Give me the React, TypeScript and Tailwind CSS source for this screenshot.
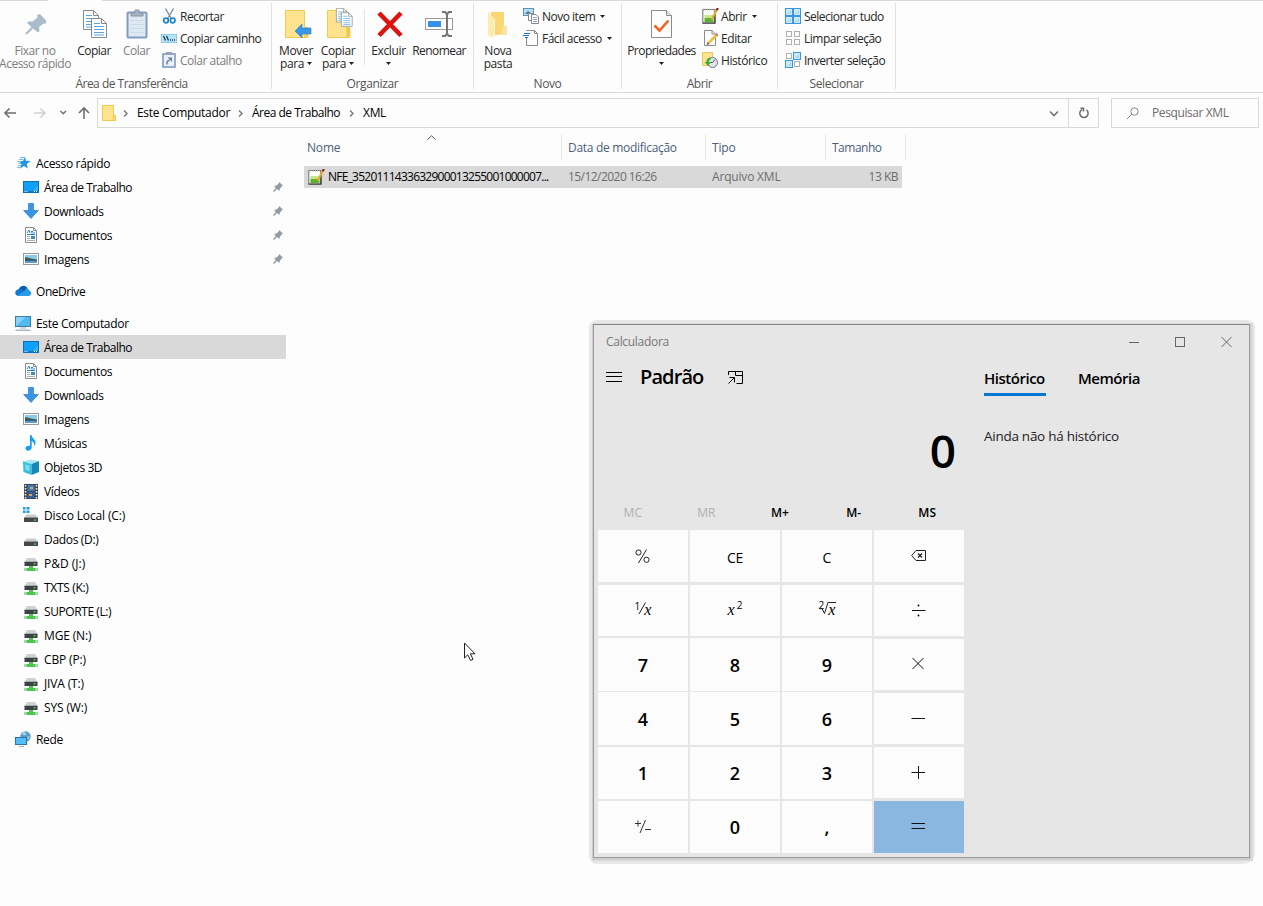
import React, { ReactNode } from 'react';
import clsx from 'clsx';

/* ---------- ribbon icons ---------- */

const PinLarge = () => (
  <svg width="32" height="32" viewBox="0 0 32 32" fill="#a9bccb">
    <path d="M18 7 L21 6 L27.500 13 L26.500 16 L24.500 15.500 L20 19 L20.500 23 L19 24.500 L14 20.500 L8.500 26 L6.500 26.500 L7 24.500 L12.500 19 L8 15 L9.500 13.500 L13.500 13.500 L18.500 9.500 Z" />
  </svg>
);

const Page = ({ x, y }: { x: number; y: number }) => (
  <g transform={`translate(${x} ${y})`}>
    <path d="M.5 .5 H10.500 L15.500 5.500 V19.500 H.5 Z" fill="#fff" stroke="#8a8a8a" />
    <path d="M10.500 .5 V5.500 H15.500" fill="none" stroke="#8a8a8a" />
    <path d="M3 5.500 H9 M3 8.500 H13 M3 11.500 H13 M3 14.500 H13 M3 17 H13" stroke="#58a6e8" />
  </g>
);

const CopyLarge = () => (
  <svg width="32" height="32" viewBox="0 0 32 32">
    <Page x={5} y={2} />
    <Page x={13} y={10} />
  </svg>
);

const PasteLarge = () => (
  <svg width="32" height="32" viewBox="0 0 32 32">
    <rect x="6.500" y="4.500" width="19" height="25" rx="1" fill="#dfe9f4" stroke="#7f9cc4" strokeWidth="2" />
    <path d="M10 8 V5 H14 V2 H18 V5 H22 V8 Z" fill="#aab4be" stroke="#8795a5" />
    <path d="M9 12.500 H23 M9 16.500 H23 M9 20.500 H23 M9 24.500 H23" stroke="#c9daeb" />
  </svg>
);

const FolderShape = () => (
  <>
    <path d="M3 2 H23 V22 H27 V30 H3 Z" fill="#ffe38f" />
    <path d="M3.500 2.500 H22.500 V21 M25 29.500 H3.500 V2.500" fill="none" stroke="#efcb52" />
    <path d="M22.500 19 H26 V28 L22.500 30 Z" fill="#f0c64c" />
  </>
);

const MoveTo = () => (
  <svg width="32" height="32" viewBox="-2 0 32 32">
    <FolderShape />
    <path d="M13 23 L20 16 V20 H29 V26 H20 V30 Z" fill="#3a96e6" stroke="#2c83d0" strokeWidth=".6" />
  </svg>
);

const CopyTo = () => (
  <svg width="32" height="32" viewBox="-2 0 32 32">
    <FolderShape />
    <g transform="translate(12 0) scale(.72)">
      <Page x={0} y={0} />
      <Page x={7} y={6} />
    </g>
  </svg>
);

const Delete = () => (
  <svg width="32" height="32" viewBox="0 0 32 32">
    <path d="M6 5 L28 27.500 M28 5 L6 27.500" stroke="#e0120f" strokeWidth="4.600" />
  </svg>
);

const Rename = () => (
  <svg width="32" height="32" viewBox="0 0 32 32" fill="none">
    <rect x="2.500" y="10.500" width="27" height="11" stroke="#9a9a9a" fill="#fff" />
    <rect x="5" y="13" width="13" height="6" fill="#3592e4" />
    <path d="M24 6 V26" stroke="#757575" strokeWidth="2" />
    <path d="M19 4 H22 L24 6 L26 4 H29 M19 28 H22 L24 26 L26 28 H29" stroke="#757575" strokeWidth="2" />
  </svg>
);

const NewFolder = () => (
  <svg width="32" height="32" viewBox="0 0 32 32">
    <path d="M9 4 H22 V26 L9 28 Z" fill="#f9d775" />
    <path d="M21 18 H25 V27 H19 Z" fill="#fbe4a0" />
    <path d="M6 4 L12 10 V20 L10 30 L6 27 Z" fill="#fdebb0" />
    <path d="M12 12 V24 L9.500 30 L13 27 V10 Z" fill="#fff6d8" />
  </svg>
);

const Properties = () => (
  <svg width="32" height="32" viewBox="0 0 32 32" fill="none">
    <path d="M5.500 2.500 H20.500 L25.500 7.500 V29.500 H5.500 Z" fill="#fff" stroke="#8c8c8c" />
    <path d="M20.500 2.500 V7.500 H25.500" fill="#e6e6e6" stroke="#8c8c8c" />
    <path d="M8.500 17.500 L13.500 22.500 L22.500 12.500" stroke="#f26422" strokeWidth="2.600" />
  </svg>
);

const Cut = () => (
  <svg width="16" height="16" viewBox="0 0 16 16" fill="none">
    <path d="M4.500 .5 L10.500 11 M12.500 .5 L6.500 11" stroke="#8a949c" strokeWidth="1.500" />
    <circle cx="5" cy="12.500" r="2.300" stroke="#1b84d0" strokeWidth="1.700" />
    <circle cx="11.700" cy="12.500" r="2.300" stroke="#1b84d0" strokeWidth="1.700" />
  </svg>
);

const CopyPath = () => (
  <svg width="16" height="16" viewBox="0 0 16 16">
    <rect x=".5" y="4.500" width="15" height="8" fill="#b5e4fa" stroke="#8fcbe9" />
    <path d="M2.500 6 L4.500 10.500 M5.500 6 L7.500 10.500 M9 10 h1 M11 10 h1 M13 10 h1" stroke="#173b57" strokeWidth="1.300" />
  </svg>
);

const PasteShortcut = () => (
  <svg width="16" height="16" viewBox="0 0 16 16">
    <rect x="2" y="2" width="12" height="13" fill="#eaf1f8" stroke="#7f9ac0" strokeWidth="1.600" />
    <rect x="5" y="0" width="6" height="3" fill="#93a4b8" />
    <path d="M6 12.500 C5.500 10 6.500 8.500 8.500 8.500" fill="none" stroke="#67809f" strokeWidth="1.500" />
    <path d="M6.500 5.500 H11 V10 Z" fill="#67809f" />
  </svg>
);

const NewItem = () => (
  <svg width="16" height="16" viewBox="0 0 16 16">
    <rect x=".5" y=".5" width="10" height="7" fill="#b9def2" stroke="#5b93b5" />
    <path d="M2 6 L5 3 L9 6" fill="#3f7896" />
    <path d="M5.500 5.500 H10 V12.500 H5.500 Z" fill="#fff" stroke="#8a8a8a" />
    <path d="M8.500 6.500 H13 L15.500 9 V15.500 H8.500 Z" fill="#fff" stroke="#8a8a8a" />
    <path d="M10 9.500 H14 M10 11.500 H14 M10 13.500 H14" stroke="#8fa7c4" />
  </svg>
);

const EasyAccess = () => (
  <svg width="16" height="16" viewBox="0 0 16 16" fill="none">
    <path d="M3.500 .5 H11.500 L14.500 3.500 V15.500 H3.500 V8" fill="#fff" stroke="#8a8a8a" />
    <path d="M11.500 .5 V3.500 H14.500" stroke="#8a8a8a" />
    <path d="M1 3.500 H7 M0 5.500 H6 M2 7.500 H5" stroke="#1d6fb5" strokeWidth="1.200" />
  </svg>
);

const NotepadIcon = () => (
  <svg width="17" height="16" viewBox="0 0 17 16">
    <rect x=".8" y="1.500" width="12" height="13.700" fill="#fbfdf8" stroke="#6b6f6b" />
    <path d="M1 1.500 H13" stroke="#9aa6a0" strokeWidth="1.600" strokeDasharray="1 1" />
    <path d="M.8 15 H13 V6" fill="none" stroke="#2f332f" strokeWidth="1.200" />
    <rect x="2.500" y="7" width="9" height="3" fill="#c6e68a" />
    <rect x="2.500" y="10" width="9" height="4" fill="#5cb22e" />
    <path d="M14.800 2 L9.500 12" stroke="#e9a62c" strokeWidth="2" />
    <path d="M15.900 0 L14.700 2.300" stroke="#8b1a1a" strokeWidth="2.200" />
  </svg>
);

const EditIcon = () => (
  <svg width="16" height="16" viewBox="0 0 16 16">
    <path d="M2.500 .5 H10 L13.500 4 V15.500 H2.500 Z" fill="#fff" stroke="#8d8d8d" />
    <path d="M10 .5 V4 H13.500" fill="none" stroke="#8d8d8d" />
    <path d="M14.500 5 L6.500 13" stroke="#f2bd42" strokeWidth="2.500" />
    <path d="M15.500 4 L14 5.500" stroke="#d9746b" strokeWidth="2.500" />
    <path d="M4.500 15 L5.500 12 L7.500 14 Z" fill="#555" />
  </svg>
);

const HistoryIcon = () => (
  <svg width="16" height="16" viewBox="0 0 16 16">
    <path d="M.5 .5 H10.500 V13.500 H.5 Z" fill="#ffe38f" stroke="#e9c655" />
    <circle cx="10.500" cy="10.500" r="5" fill="#dfe5e9" stroke="#707b83" />
    <path d="M10.500 10.500 L13 7.500 M10.500 10.500 H8" stroke="#4b565e" fill="none" />
    <path d="M8 5.500 C5 6 4.500 8 4.500 10 H2.500 L6 14 L9 10 H7 C7 8.500 7.500 7.500 9 7.500 Z" fill="#3fae3f" />
  </svg>
);

const SelectTile = ({ x, y, on }: { x: number; y: number; on: boolean }) =>
  on ? (
    <>
      <rect x={x + 0.5} y={y + 0.5} width="7" height="7" fill="#cdeafc" stroke="#3a96dc" />
      <path d={`M${x + 2} ${y + 6} L${x + 6} ${y + 2} V${y + 6} Z`} fill="#a5d8f8" />
    </>
  ) : (
    <rect x={x + 1.5} y={y + 1.5} width="5" height="5" fill="#fff" stroke="#b0b0b0" />
  );

const SelectIcon = ({ tiles }: { tiles: boolean[] }) => (
  <svg width="16" height="16" viewBox="0 0 16 16">
    {tiles.map((on, i) => (
      <SelectTile key={i} x={(i % 2) * 8} y={i < 2 ? 0 : 8} on={on} />
    ))}
  </svg>
);

/* ---------- navigation icons ---------- */

const StarIcon = () => (
  <svg width="16" height="16" viewBox="0 0 16 16">
    <path d="M10 1.500 L10.800 5.800 L15.500 6 L11.700 9 L12.800 13.500 L9 11 L5 13.700 L6.500 9.300 L4 6.300 L8 6 Z" fill="#2494e4" />
    <path d="M5 2.500 H9 M4 4.500 H8 M2.500 6.500 H6 M3.500 8.500 H6 M3 10.500 H6 M2 12.500 H5" stroke="#6dbdf2" />
  </svg>
);

const DesktopIcon = () => (
  <svg width="16" height="16" viewBox="0 0 16 16">
    <rect x=".5" y="2.500" width="15" height="11" fill="#10a0fb" stroke="#0d6db8" />
    <path d="M9 12.500 L15 6.500 V12.500 Z" fill="#2fb0ff" />
    <path d="M1 12.500 H15" stroke="#0b79cd" />
    <path d="M1.500 12.500 h1 M3.500 12.500 h1 M11 12.500 h1 M13 12.500 h1" stroke="#fff" />
  </svg>
);

const DownloadIcon = () => (
  <svg width="16" height="16" viewBox="0 0 16 16">
    <path d="M5.500 .5 H10.500 V7.500 H15.300 L8 15.500 L.7 7.500 H5.500 Z" fill="#3a94e6" stroke="#2d7fca" strokeWidth=".7" />
  </svg>
);

const DocumentIcon = () => (
  <svg width="16" height="16" viewBox="0 0 16 16">
    <path d="M2.500 .5 H10.500 L13.500 3.500 V15.500 H2.500 Z" fill="#fff" stroke="#8c8c8c" />
    <path d="M10.500 .5 V3.500 H13.500" fill="none" stroke="#8c8c8c" />
    <path d="M4 6 L6 3 L7 6 M8 4.500 H10 M4 7.500 H12 M8 6 H12" stroke="#2b8bd0" fill="none" />
    <path d="M4 9.500 H7 M4 11.500 H7 M4 13.500 H12" stroke="#9bb4c8" />
    <rect x="8" y="9" width="4" height="3" fill="#3f8fb8" />
  </svg>
);

const PictureIcon = () => (
  <svg width="16" height="16" viewBox="0 0 16 16">
    <rect x=".5" y="2.500" width="15" height="11" fill="#fff" stroke="#9a9a9a" />
    <rect x="2" y="4" width="12" height="8" fill="#8fc8ec" />
    <path d="M2 6 C5 6.500 9 8 14 8.500 V10 H2 Z" fill="#3d5f63" />
    <rect x="2" y="10" width="12" height="2" fill="#5c9cc8" />
  </svg>
);

const OneDriveIcon = () => (
  <svg width="17" height="16" viewBox="0 0 17 16">
    <path d="M3.500 7 C5 2 11 1.500 12.500 5.500 L9 10 L3 8 Z" fill="#0a5fb4" />
    <path d="M4 13 C-1 13 -1 6.500 4 6.300 C6 5.800 8 7.500 9 8.500 L6 13 Z" fill="#1279d0" />
    <path d="M2.500 12.500 L10 7.500 C10.500 4.500 14 5 14.200 7.500 C17 8 17 13 13.500 13 H4 Z" fill="#2a9be8" />
  </svg>
);

const ComputerIcon = () => (
  <svg width="16" height="16" viewBox="0 0 16 16">
    <rect x=".5" y="1.500" width="15" height="10" fill="#4fb9f2" stroke="#3d7ea6" />
    <path d="M1 11 V2 H11 Z" fill="#86d2f9" />
    <path d="M5 13 H11" stroke="#9db0bb" />
    <path d="M.5 15.200 H15.500" stroke="#8796a1" />
  </svg>
);

const MusicIcon = () => (
  <svg width="16" height="16" viewBox="0 0 16 16">
    <path d="M7 0 H8.500 C8.500 3 12.500 4 12.500 7.500 C12.500 9 12 10 11 11 C11.500 8 10 6.500 8.700 6 V12.500 C8.700 16 3 17 2.500 13.500 C2.300 11 5 10.200 7 11 Z" fill="#149ff0" />
  </svg>
);

const CubeIcon = () => (
  <svg width="16" height="16" viewBox="0 0 16 16">
    <path d="M0 2.500 L7 .5 L16 2 L8.500 5 Z" fill="#a5e7f5" />
    <path d="M0 2.500 L8.500 5 V16 L.5 13 Z" fill="#35bfe0" />
    <path d="M8.500 5 L16 2 V13 L8.500 16 Z" fill="#1789b8" />
    <path d="M2 5.500 L6.500 6.500 V12 L2.500 11 Z" fill="#7cdcf0" />
  </svg>
);

const VideoIcon = () => (
  <svg width="16" height="16" viewBox="0 0 16 16">
    <rect x="1" y="1" width="14" height="15" fill="#44464a" />
    <path d="M2.500 2 V16 M13.500 2 V16" stroke="#f2f2f2" strokeWidth="1.500" strokeDasharray="1.500 1.500" />
    <rect x="4.500" y="2" width="7" height="6" fill="#3b78c2" />
    <rect x="4.500" y="9" width="7" height="6" fill="#2e5fa5" />
    <path d="M7 4 H10 V6 H7 Z M6 11 H9 V13 H6 Z" fill="#e3a33a" />
  </svg>
);

const DriveIcon = ({ windows }: { windows?: boolean }) => (
  <svg width="16" height="16" viewBox="0 0 16 16">
    {windows && <path d="M0 0 H2.500 V2.500 H0 Z M3.500 0 H6.500 V2.500 H3.500 Z M0 3.500 H2.500 V6 H0 Z M3.500 3.500 H6.500 V6 H3.500 Z" fill="#18a0f5" />}
    <path d="M3.500 7.500 H12.500 L15 10.800 H1 Z" fill="#c9cccd" />
    <rect x="1" y="10.500" width="14" height="4.500" rx=".5" fill="#454749" />
    <rect x="11" y="12.500" width="2" height="1.200" fill="#55e04c" />
  </svg>
);

const NetDriveIcon = () => (
  <svg width="16" height="16" viewBox="0 0 16 16">
    <path d="M4 3 H12 L14.500 7 H1.500 Z" fill="#cfd2d4" />
    <rect x="1.500" y="6.800" width="13" height="4.200" rx=".5" fill="#3e4143" />
    <rect x="10.500" y="8.200" width="2" height="1.300" fill="#55e04c" />
    <path d="M6 11 H10 V13 H12.500 V16 H3.500 V13 H6 Z" fill="#4cc552" />
    <path d="M1 13.200 H4 V15.800 H1 Z M12 13.200 H15 V15.800 H12 Z" fill="#8fd492" />
  </svg>
);

const NetworkIcon = () => (
  <svg width="16" height="16" viewBox="0 0 16 16">
    <circle cx="10.500" cy="5.500" r="5.200" fill="#5a9cc6" />
    <path d="M8 1 C6 4 9 5 11 4 C12 2 10 1 8 1 Z M12 6 L15 5 L13 9 Z" fill="#a6d2ea" />
    <rect x=".5" y="6.500" width="11" height="7" fill="#55bdf5" stroke="#2c74a8" />
    <path d="M4 15.500 H9" stroke="#9fb2bf" />
  </svg>
);

const PinSmall = () => (
  <svg width="10" height="10" viewBox="0 0 10 10" fill="#909ba7">
    <path d="M6 0 L10 3.500 L8.500 4.500 L6.800 7 L6.500 9 L4.200 7 L1 10 L0 9.500 L2.800 6 L1 4 L3.500 3.500 L5.700 1.500 Z" />
  </svg>
);

const Chevron = () => (
  <svg width="5" height="7" viewBox="0 0 5 7" fill="none" stroke="#777" strokeWidth="1.400">
    <path d="M1 .5 L4 3.500 L1 6.500" />
  </svg>
);

/* ---------- ribbon pieces ---------- */

const Caret = () => (
  <svg className="inline-block shrink-0" width="5" height="3" viewBox="0 0 5 3">
    <path d="M0 0 H5 L2.500 3 Z" fill="#222" />
  </svg>
);

interface BigButtonProps {
  icon: ReactNode;
  lines: ReactNode[];
  className: string;
}

const BigButton = ({ icon, lines, className }: BigButtonProps) => (
  <div className={clsx('flex shrink-0 flex-col items-center pt-2', className)}>
    {icon}
    <div className="mt-1 flex flex-col items-center leading-[13px]">
      {lines.map((line, i) => (
        <span key={i} className="flex h-[13px] items-center gap-[3px] whitespace-nowrap">
          {line}
        </span>
      ))}
    </div>
  </div>
);

interface SmallButtonProps {
  icon: ReactNode;
  label: string;
  caret?: boolean;
  muted?: boolean;
}

const SmallButton = ({ icon, label, caret, muted }: SmallButtonProps) => (
  <div className={clsx('flex h-[22px] items-center whitespace-nowrap', muted && 'text-[#7d7d7d]')}>
    <span className="flex w-[19px] shrink-0">{icon}</span>
    <span className="pt-px">{label}</span>
    {caret && <span className="ml-[5px] flex"><Caret /></span>}
  </div>
);

const Group = ({ title, className, children }: { title: string; className: string; children: ReactNode }) => (
  <div className={clsx('flex shrink-0 flex-col', className)}>
    <div className="flex h-[77px]">{children}</div>
    <div className="text-center leading-[14px] text-[#555]">{title}</div>
  </div>
);

const Divider = () => <div className="mt-[3px] h-[86px] w-px shrink-0 bg-[#e2e2e2]" />;

const Ribbon = () => (
  <div className="flex h-[93px] border-b border-[#d9d9d9] text-[12px] tracking-[-0.42px] text-[#262626]">
    <Group title="Área de Transferência" className="w-[271px] pr-2 tracking-[-0.5px]">
      <BigButton icon={<PinLarge />} lines={['Fixar no', 'Acesso rápido']} className="w-[70px] text-[#7d7d7d]" />
      <BigButton icon={<CopyLarge />} lines={['Copiar']} className="ml-0.5 w-[44px]" />
      <BigButton icon={<PasteLarge />} lines={['Colar']} className="w-[41px] text-[#7d7d7d]" />
      <div className="ml-1 pt-[5px]">
        <SmallButton icon={<Cut />} label="Recortar" />
        <SmallButton icon={<CopyPath />} label="Copiar caminho" />
        <SmallButton icon={<PasteShortcut />} label="Colar atalho" muted />
      </div>
    </Group>
    <Divider />
    <Group title="Organizar" className="w-[201px] tracking-[-0.35px]">
      <BigButton icon={<MoveTo />} lines={['Mover', <>para <Caret /></>]} className="ml-[3px] w-[42px]" />
      <BigButton icon={<CopyTo />} lines={['Copiar', <>para <Caret /></>]} className="w-[42px]" />
      <div className="ml-[5px] mt-2.5 h-[55px] w-px bg-[#e2e2e2]" />
      <BigButton icon={<Delete />} lines={['Excluir', <Caret />]} className="ml-0.5 w-[43px]" />
      <BigButton icon={<Rename />} lines={['Renomear']} className="w-[58px] tracking-[-0.55px]" />
    </Group>
    <Divider />
    <Group title="Novo" className="w-[147px]">
      <BigButton icon={<NewFolder />} lines={['Nova', 'pasta']} className="ml-1 w-10" />
      <div className="ml-[5px] pt-[5px] tracking-[-0.5px]">
        <SmallButton icon={<NewItem />} label="Novo item" caret />
        <SmallButton icon={<EasyAccess />} label="Fácil acesso" caret />
      </div>
    </Group>
    <Divider />
    <Group title="Abrir" className="w-[155px]">
      <BigButton icon={<Properties />} lines={['Propriedades', <Caret />]} className="ml-1 w-[71px] tracking-[-0.55px]" />
      <div className="ml-[5px] pt-[5px]">
        <SmallButton icon={<NotepadIcon />} label="Abrir" caret />
        <SmallButton icon={<EditIcon />} label="Editar" />
        <SmallButton icon={<HistoryIcon />} label="Histórico" />
      </div>
    </Group>
    <Divider />
    <Group title="Selecionar" className="w-[117px]">
      <div className="ml-[7px] pt-[5px] tracking-[-0.5px]">
        <SmallButton icon={<SelectIcon tiles={[true, true, true, true]} />} label="Selecionar tudo" />
        <SmallButton icon={<SelectIcon tiles={[false, false, false, false]} />} label="Limpar seleção" />
        <SmallButton icon={<SelectIcon tiles={[false, true, true, false]} />} label="Inverter seleção" />
      </div>
    </Group>
    <Divider />
  </div>
);

/* ---------- address bar ---------- */

const AddressBar = () => (
  <div className="flex h-[35px] items-start pt-[5px] text-[12px] tracking-[-0.3px]">
    <div className="flex h-[30px] w-[97px] shrink-0 items-center">
      <svg width="97" height="30" viewBox="0 0 97 30" fill="none" strokeWidth="1.600">
        <path d="M16 15 H5 M9.500 10.500 L5 15 L9.500 19.500" stroke="#6e6e6e" />
        <path d="M34 15 H45 M40.500 10.500 L45 15 L40.500 19.500" stroke="#d2d2d2" />
        <path d="M60.500 13 L63.200 15.700 L66 13" stroke="#777" />
        <path d="M84 21 V10 M79 15 L84 10 L89 15" stroke="#6e6e6e" />
      </svg>
    </div>
    <div className="flex h-[30px] w-[1002px] shrink-0 items-center border border-[#d9d9d9]">
      <svg className="ml-1" width="14" height="17" viewBox="0 0 14 17">
        <path d="M.5 .5 H11.500 V10.500 H13.500 V15.500 H.5 Z" fill="#ffe38f" stroke="#efc94e" />
        <path d="M11.500 10 V15.500" stroke="#efc94e" />
      </svg>
      <span className="ml-[7px] w-[5px]"><Chevron /></span>
      <span className="ml-[9px] w-[93px] whitespace-nowrap">Este Computador</span>
      <span className="ml-2 w-[5px]"><Chevron /></span>
      <span className="ml-[9px] w-[89px] whitespace-nowrap tracking-[-0.5px]">Área de Trabalho</span>
      <span className="ml-2 w-[5px]"><Chevron /></span>
      <span className="ml-[9px]">XML</span>
      <svg className="ml-auto mr-[9px]" width="10" height="7" viewBox="0 0 10 7" fill="none">
        <path d="M1 1.500 L5 5.500 L9 1.500" stroke="#777" strokeWidth="1.700" />
      </svg>
      <div className="flex h-full w-[30px] items-center justify-center border-l border-[#d9d9d9]">
        <svg width="12" height="12" viewBox="0 0 12 12" fill="none" stroke="#6a6a6a" strokeWidth="1.500">
          <path d="M8.500 3 A4.200 4.200 0 1 1 4 2.600 M2.500 1.300 H5.500 V4.500" />
        </svg>
      </div>
    </div>
    <div className="ml-3 flex h-[30px] w-[148px] shrink-0 items-center border border-[#d9d9d9] tracking-[-0.4px] text-[#6d6d6d]">
      <svg className="ml-3.5" width="13" height="13" viewBox="0 0 13 13" fill="none" stroke="#8a7f88">
        <circle cx="8.500" cy="4.500" r="3.700" />
        <path d="M5.800 7.200 L.8 12.200" />
      </svg>
      <span className="ml-[13px]">Pesquisar XML</span>
    </div>
  </div>
);

/* ---------- sidebar ---------- */

interface NavItem {
  label: string;
  icon: ReactNode;
  root?: boolean;
  pinned?: boolean;
  selected?: boolean;
  spacing?: string;
}

const navSections: NavItem[][] = [
  [
    { label: 'Acesso rápido', icon: <StarIcon />, root: true },
    { label: 'Área de Trabalho', icon: <DesktopIcon />, pinned: true, spacing: 'tracking-[-0.5px]' },
    { label: 'Downloads', icon: <DownloadIcon />, pinned: true },
    { label: 'Documentos', icon: <DocumentIcon />, pinned: true },
    { label: 'Imagens', icon: <PictureIcon />, pinned: true }
  ],
  [{ label: 'OneDrive', icon: <OneDriveIcon />, root: true, spacing: 'tracking-[-0.45px]' }],
  [
    { label: 'Este Computador', icon: <ComputerIcon />, root: true },
    { label: 'Área de Trabalho', icon: <DesktopIcon />, selected: true, spacing: 'tracking-[-0.5px]' },
    { label: 'Documentos', icon: <DocumentIcon /> },
    { label: 'Downloads', icon: <DownloadIcon /> },
    { label: 'Imagens', icon: <PictureIcon /> },
    { label: 'Músicas', icon: <MusicIcon /> },
    { label: 'Objetos 3D', icon: <CubeIcon />, spacing: 'tracking-[-0.42px]' },
    { label: 'Vídeos', icon: <VideoIcon /> },
    { label: 'Disco Local (C:)', icon: <DriveIcon windows />, spacing: 'tracking-[-0.14px]' },
    { label: 'Dados (D:)', icon: <DriveIcon /> },
    { label: 'P&D (J:)', icon: <NetDriveIcon />, spacing: 'tracking-[0px]' },
    { label: 'TXTS (K:)', icon: <NetDriveIcon /> },
    { label: 'SUPORTE (L:)', icon: <NetDriveIcon />, spacing: 'tracking-[-0.42px]' },
    { label: 'MGE (N:)', icon: <NetDriveIcon />, spacing: 'tracking-[-0.15px]' },
    { label: 'CBP (P:)', icon: <NetDriveIcon />, spacing: 'tracking-[-0.15px]' },
    { label: 'JIVA (T:)', icon: <NetDriveIcon />, spacing: 'tracking-[-0.15px]' },
    { label: 'SYS (W:)', icon: <NetDriveIcon />, spacing: 'tracking-[-0.15px]' }
  ],
  [{ label: 'Rede', icon: <NetworkIcon />, root: true }]
];

const Sidebar = () => (
  <div className="flex w-[286px] shrink-0 flex-col gap-2 pt-[23px] text-[12px]">
    {navSections.map((section, i) => (
      <div key={i}>
        {section.map((item) => (
          <div
            key={item.label}
            className={clsx(
              'flex h-6 items-center whitespace-nowrap',
              item.root ? 'pl-[15px]' : 'pl-[23px]',
              item.selected && 'bg-[#d9d9d9]'
            )}
          >
            <span className="w-[21px] shrink-0">{item.icon}</span>
            <span className={clsx('pt-px', item.spacing ?? 'tracking-[-0.32px]')}>{item.label}</span>
            {item.pinned && <span className="ml-auto mr-[3px]"><PinSmall /></span>}
          </div>
        ))}
      </div>
    ))}
  </div>
);

/* ---------- file list ---------- */

const FileList = () => (
  <div className="ml-[18px] w-[602px] pt-[7px] text-[12px] tracking-[-0.18px]">
    <div className="flex h-[25px] items-center text-[#4c607a]">
      <div className="relative flex h-full w-[258px] items-center border-r border-[#e5e5e5] pl-[3px]">
        Nome
        <svg className="absolute left-[123px] top-0" width="9" height="5" viewBox="0 0 9 5" fill="none">
          <path d="M.5 4.500 L4.500 .8 L8.500 4.500" stroke="#555" />
        </svg>
      </div>
      <div className="flex h-full w-36 items-center border-r border-[#e5e5e5] pl-1.5 tracking-[-0.3px]">Data de modificação</div>
      <div className="flex h-full w-[120px] items-center border-r border-[#e5e5e5] pl-1.5">Tipo</div>
      <div className="flex h-full w-20 items-center border-r border-[#e5e5e5] pl-1.5 tracking-[-0.05px] text-nowrap"><span className="tracking-[-0.5px]">Tamanho</span></div>
    </div>
    <div className="mt-1.5 flex h-[22px] w-[598px] items-center whitespace-nowrap bg-[#d9d9d9] text-[#6d6d6d]">
      <div className="flex w-[258px] items-center pl-1 text-black">
        <NotepadIcon />
        <span className="ml-[3px] tracking-[-0.76px]">NFE_3520111433632900013255001000007...</span>
      </div>
      <div className="w-36 pl-1.5 tracking-[-0.55px]">15/12/2020 16:26</div>
      <div className="w-[120px] pl-1.5">Arquivo XML</div>
      <div className="flex-1 pr-1 text-right tracking-[-0.5px]">13 KB</div>
    </div>
  </div>
);

/* ---------- calculator ---------- */

const keyClass = 'flex items-center justify-center bg-[#fcfcfc]';

const Digit = ({ children, className }: { children: ReactNode; className: string }) => (
  <div className={clsx(keyClass, 'text-[18px] font-semibold', className)}>{children}</div>
);

const Fn = ({ children, className }: { children: ReactNode; className: string }) => (
  <div className={clsx(keyClass, className)}>{children}</div>
);

const OpIcon = ({ d }: { d: string }) => (
  <svg className="mr-px" width="15" height="15" viewBox="0 0 15 15" fill="none" stroke="#111">
    <path d={d} />
  </svg>
);

const Keypad = () => (
  <div className="ml-1 grid w-[366px] grid-cols-4 grid-rows-[repeat(6,54px)] gap-x-0.5">
    <Fn className="h-[52px]">
      <svg className="mr-0.5" width="15" height="15" viewBox="0 0 15 15" fill="none" stroke="#222">
        <circle cx="3.500" cy="3.500" r="2.600" />
        <circle cx="11.500" cy="10.800" r="2.600" />
        <path d="M11.500 .5 L3.500 14" />
      </svg>
    </Fn>
    <Fn className="h-[52px] pt-0.5 text-[14px] tracking-[-0.3px]">CE</Fn>
    <Fn className="h-[52px] pt-0.5 text-[14px]">C</Fn>
    <Fn className="h-[52px]">
      <svg className="mr-px" width="15" height="12" viewBox="0 0 15 12" fill="none" stroke="#222">
        <path d="M5 .5 H14.500 V10.500 H5 L.7 5.500 Z" />
        <path d="M7 3.500 L11 7.500 M11 3.500 L7 7.500" strokeWidth="1.300" />
      </svg>
    </Fn>

    <Fn className="mt-px h-[51px] pb-0.5">
      <span className="flex items-start">
        <span className="text-[10px] leading-[9px]">1</span>
        <svg className="-ml-0.5" width="8" height="13" viewBox="0 0 8 13" fill="none" stroke="#222"><path d="M7.500 .5 L1 12" /></svg>
        <span className="-ml-0.5 font-['Liberation_Serif',serif] text-[16px] italic leading-[16px]">x</span>
      </span>
    </Fn>
    <Fn className="mt-px h-[51px] pb-0.5">
      <span className="flex items-start">
        <span className="font-['Liberation_Serif',serif] text-[16px] italic leading-[18px]">x</span>
        <span className="ml-0.5 text-[10px] leading-[9px]">2</span>
      </span>
    </Fn>
    <Fn className="mt-px h-[51px] pb-0.5">
      <span className="flex items-start">
        <span className="text-[10px] leading-[9px]">2</span>
        <svg className="-ml-1 -mr-2" width="16" height="14" viewBox="0 0 16 14" fill="none" stroke="#222">
          <path d="M.5 8 L2 7.500 L4.500 12.500 L8 1.500 H16" />
        </svg>
        <span className="font-['Liberation_Serif',serif] text-[16px] italic leading-[17px]">x</span>
      </span>
    </Fn>
    <Fn className="mt-px h-[51px] pb-px">
      <svg className="mr-px" width="15" height="15" viewBox="0 0 15 15">
        <path d="M1 7.500 H14.500" stroke="#111" />
        <circle cx="7.500" cy="2.500" r=".9" />
        <circle cx="7.500" cy="12.500" r=".9" />
      </svg>
    </Fn>

    <Digit className="h-[53px] pt-0.5">7</Digit>
    <Digit className="h-[53px] pt-0.5">8</Digit>
    <Digit className="h-[53px] pt-0.5">9</Digit>
    <Fn className="mt-px h-[51px] pb-0.5"><OpIcon d="M1.500 2 L12.500 13 M12.500 2 L1.500 13" /></Fn>

    <Digit className="h-[53px] pt-0.5">4</Digit>
    <Digit className="h-[53px] pt-0.5">5</Digit>
    <Digit className="h-[53px] pt-0.5">6</Digit>
    <Fn className="mt-px h-[51px]"><OpIcon d="M.5 7.500 H14" /></Fn>

    <Digit className="mt-px h-[52px]">1</Digit>
    <Digit className="mt-px h-[52px]">2</Digit>
    <Digit className="mt-px h-[52px]">3</Digit>
    <Fn className="mt-px h-[51px]"><OpIcon d="M.5 7.500 H14 M7.500 1 V14" /></Fn>

    <Fn className="mt-px h-[52px] pb-0.5">
      <svg width="16" height="15" viewBox="0 0 16 15" fill="none" stroke="#333">
        <path d="M0 4.500 H6 M3 1.500 V7.500 M10.500 1 L5 14 M10 10.500 H16" />
      </svg>
    </Fn>
    <Digit className="mt-px h-[52px]">0</Digit>
    <Digit className="mt-px h-[52px]">,</Digit>
    <div className="mt-px flex h-[52px] items-center justify-center bg-[#8ab7e0] pb-[3px]">
      <OpIcon d="M.5 5.500 H14 M.5 10.500 H14" />
    </div>
  </div>
);

const Calculator = () => (
  <div className="absolute left-[589px] top-[320px] h-[544px] w-[666px] rounded-[8px] rounded-br-[12px] bg-[#e8e8e8] p-1">
    <div className="flex h-[534px] w-[657px] flex-col border border-[#9b9b9b] border-t-[#858585] bg-[#e6e6e6] shadow-[0_1px_0_1px_#cecece,1px_1px_0_2px_#dadada]">
      <div className="flex h-[32px] items-center pl-3 pt-px text-[12px] tracking-[-0.3px] text-[#777]">
        Calculadora
        <svg className="ml-auto mr-[17px]" width="103" height="12" viewBox="0 0 103 12" fill="none" stroke="#666">
          <path d="M0 6.500 H10" />
          <rect x="46.500" y="1.500" width="9" height="9" />
          <path d="M92.500 1 L102.500 11 M102.500 1 L92.500 11" />
        </svg>
      </div>
      <div className="flex">
        <div className="w-[371px]">
          <div className="flex h-10 items-center pl-3">
            <svg width="16" height="10" viewBox="0 0 16 10" stroke="#000">
              <path d="M0 .5 H16 M0 4.500 H16 M0 9.500 H16" />
            </svg>
            <span className="ml-[18px] w-[65px] text-[20px] font-semibold leading-6 tracking-[-0.9px]">Padrão</span>
            <svg className="ml-[23px]" width="15" height="13" viewBox="0 0 15 13" fill="none" stroke="#000">
              <path d="M.5 4 V.5 H14.500 V12.500 H8.500 M7.500 .5 V4.500 H14.500 M.5 12.500 L6 7 M1.500 6.500 H6.500 V11.500" />
            </svg>
          </div>
          <div className="flex h-[106px] items-center justify-end pr-[9px] text-[46px] font-semibold leading-none">0</div>
          <div className="grid h-[27px] w-[370px] grid-cols-5 items-start pl-0.5 pt-[2px] text-center text-[12px] font-semibold leading-4">
            <span className="font-normal text-[#b0b0b0]">MC</span>
            <span className="font-normal text-[#b0b0b0]">MR</span>
            <span>M+</span>
            <span>M-</span>
            <span>MS</span>
          </div>
          <Keypad />
        </div>
        <div className="ml-[19px] pt-2.5">
          <div className="flex gap-8 text-[15px] font-semibold leading-[22px] tracking-[-0.48px]">
            <span className="w-[62px] border-b-3 border-[#0078d4] pb-1">Histórico</span>
            <span>Memória</span>
          </div>
          <div className="mt-[30px] whitespace-nowrap text-[13.5px] leading-5 tracking-[-0.27px] text-[#222]">Ainda não há histórico</div>
        </div>
      </div>
    </div>
  </div>
);

const Cursor = () => (
  <svg className="absolute left-[463px] top-[642px]" width="13" height="20" viewBox="0 0 13 20">
    <path d="M1.500 1 V16 L4.800 12.800 L7.500 18.500 L10 17.300 L7.400 11.800 H12 Z" fill="#fff" stroke="#222" />
  </svg>
);

export default function App() {
  return (
    <div className="relative h-[906px] w-[1263px] overflow-hidden bg-[#fdfdfd] font-['Open_Sans','Noto_Sans',sans-serif] text-black">
      <div className="absolute left-0 top-0 h-px w-12 bg-[#d9d9d9]" />
      <div className="absolute left-[102px] right-0 top-0 h-px bg-[#d9d9d9]" />
      <Ribbon />
      <AddressBar />
      <div className="flex">
        <Sidebar />
        <FileList />
      </div>
      <Calculator />
      <Cursor />
    </div>
  );
}
